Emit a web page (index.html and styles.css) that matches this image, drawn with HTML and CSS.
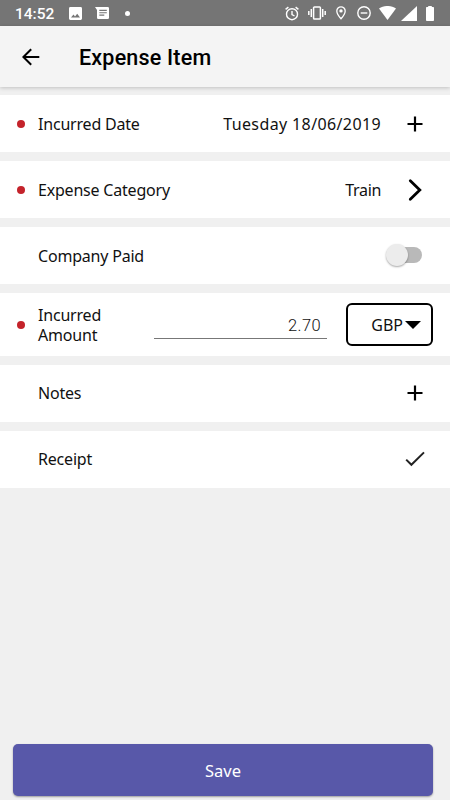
FILE: index.html
```
<!DOCTYPE html>
<html lang="en">
<head>
    <meta charset="UTF-8">
    <meta name="viewport" content="width=device-width, initial-scale=1.0">
    <title>Expense Item</title>
    <link rel="stylesheet" href="styles.css">
</head>
<body>
    <div class="status-bar">
        <span class="time">14:52</span>
        <svg class="icon-image" width="13" height="13" viewBox="0 0 13 13"><path fill="#fff" fill-rule="evenodd" d="M1.4 0h10.2Q13 0 13 1.4v10.2q0 1.4-1.4 1.4H1.4Q0 13 0 11.6V1.4Q0 0 1.4 0zM2 10.4h9L8.2 6.7 6 9.4 4.5 7.6z"/></svg>
        <svg class="icon-chat" width="14" height="13" viewBox="0 0 14 13"><path fill="#fff" fill-rule="evenodd" d="M0 0h12.7Q14 0 14 1.3v9.4q0 1.3-1.3 1.3H3.3Q2 12 2 10.7V3zM4.3 2.8v1.1h7.5V2.8zM4.3 5.2v1.1h7.5V5.2zM4.3 7.6v1.1h5V7.6z"/></svg>
        <span class="dot"></span>
        <div class="system-icons">
            <svg width="14" height="15" viewBox="0 0 14 15" fill="none" stroke="#fff" stroke-width="1.4"><circle cx="7" cy="8.2" r="5.5"/><path d="M7 5v3.5l2.5 1.5M.6 3.4l2.8-2.3M13.4 3.4l-2.8-2.3"/></svg>
            <svg class="icon-vibrate" width="18" height="14" viewBox="0 0 18 14" fill="none" stroke="#fff" stroke-width="1.5"><rect x="5.6" y="1" width="6.8" height="12" rx=".8"/><path d="M3.3 3v8M.8 5v4M14.7 3v8M17.2 5v4"/></svg>
            <svg class="icon-pin" width="10" height="14" viewBox="0 0 10 14"><path fill="none" stroke="#fff" stroke-width="1.3" d="M5 .8a4.2 4.2 0 0 1 4.2 4.2C9.2 8 5 12.8 5 12.8S.8 8 .8 5A4.2 4.2 0 0 1 5 .8z"/><circle cx="5" cy="4.9" r="1.7" fill="#fff"/></svg>
            <svg class="icon-dnd" width="14" height="14" viewBox="0 0 14 14" fill="none" stroke="#fff" stroke-width="1.4"><circle cx="7" cy="7" r="6.2"/><path d="M3.7 7h6.6"/></svg>
            <svg class="icon-wifi" width="17" height="14" viewBox="0 0 17 14"><path fill="#fff" d="M0 2.6C5-.9 12-.9 17 2.6L8.5 14z"/></svg>
            <svg class="icon-signal" width="16" height="15" viewBox="0 0 16 15"><path fill="#fff" d="M16 0v15H0z"/></svg>
            <svg class="icon-battery" width="8" height="15" viewBox="0 0 8 15"><path fill="#fff" d="M2.2 0h3.6v1h1.4q.8 0 .8.8v12.3q0 .9-.8.9H.8q-.8 0-.8-.9V1.8Q0 1 .8 1h1.4z"/></svg>
        </div>
    </div>

    <header class="app-bar">
        <svg width="18" height="18" viewBox="0 0 18 18" fill="none" stroke="#000" stroke-width="2"><path d="M17.3 9H1.6M9.2 1.2L1.4 9l7.8 7.8"/></svg>
        <h1>Expense Item</h1>
    </header>

    <main class="form">
        <div class="row required">
            <span class="label">Incurred Date</span>
            <span class="value value-date">Tuesday 18/06/2019</span>
            <svg class="action" width="24" height="24" viewBox="0 0 24 24"><path d="M12 4.5v15M4.5 12h15"/></svg>
        </div>
        <div class="row required">
            <span class="label">Expense Category</span>
            <span class="value">Train</span>
            <svg class="action chevron" width="24" height="24" viewBox="0 0 24 24"><path d="M7.3 2.7l9.5 9.3-9.5 9.3"/></svg>
        </div>
        <div class="row">
            <span class="label">Company Paid</span>
            <span class="switch"><span class="knob"></span></span>
        </div>
        <div class="row row-amount required">
            <span class="label">Incurred<br>Amount</span>
            <div class="amount">2.70</div>
            <div class="currency">
                <span>GBP</span>
                <svg width="16" height="8" viewBox="0 0 16 8"><path d="M0 0h16L8 8z"/></svg>
            </div>
        </div>
        <div class="row row-short">
            <span class="label">Notes</span>
            <svg class="action" width="24" height="24" viewBox="0 0 24 24"><path d="M12 4.5v15M4.5 12h15"/></svg>
        </div>
        <div class="row row-short">
            <span class="label">Receipt</span>
            <svg class="action check" width="24" height="24" viewBox="0 0 24 24"><path d="M3.2 12.6l5.2 5.2L21 5.4"/></svg>
        </div>
    </main>

    <footer class="footer">
        <button type="button" class="save">Save</button>
    </footer>
</body>
</html>
```
FILE: styles.css
```
* {
    margin: 0;
    padding: 0;
    box-sizing: border-box;
}

body {
    height: 100vh;
    display: flex;
    flex-direction: column;
    overflow: hidden;
    background: #f0f0f0;
    color: #111;
    font-family: 'Noto Sans', 'Open Sans', sans-serif;
    font-size: 16px;
}

svg {
    display: block;
    flex-shrink: 0;
}

.status-bar {
    height: 26px;
    flex-shrink: 0;
    display: flex;
    align-items: center;
    padding: 0 16px 0 15px;
    background: #757575;
    color: #fff;
}

.time {
    width: 54px;
    padding-top: 1px;
    font-family: Roboto, sans-serif;
    font-size: 15.5px;
    font-weight: 500;
    line-height: 26px;
}

.icon-chat {
    margin-left: 13px;
}

.dot {
    width: 5px;
    height: 5px;
    margin-left: 16px;
    border-radius: 50%;
    background: #fff;
}

.system-icons {
    display: flex;
    align-items: center;
    margin-left: auto;
}

.icon-vibrate {
    margin-left: 9px;
}

.icon-pin {
    margin-left: 10px;
}

.icon-dnd {
    margin-left: 11px;
}

.icon-wifi {
    margin-left: 8px;
}

.icon-signal {
    margin-left: 5px;
}

.icon-battery {
    margin-left: 9px;
}

.app-bar {
    height: 61px;
    flex-shrink: 0;
    display: flex;
    align-items: center;
    gap: 39px;
    padding: 1px 22px 0;
    background: #f4f4f4;
    box-shadow: 0 1px 4px rgba(0, 0, 0, 0.2);
}

h1 {
    padding-top: 1px;
    color: #000;
    font-family: Roboto, sans-serif;
    font-size: 21.5px;
    font-weight: 500;
    letter-spacing: 0.2px;
}

.form {
    display: flex;
    flex-direction: column;
    gap: 9px;
    margin-top: 8px;
}

.row {
    height: 57px;
    display: flex;
    align-items: center;
    padding: 0 23px 0 38px;
    background: #fff;
}

.required {
    padding-left: 17px;
}

.required::before {
    content: "";
    width: 8px;
    height: 8px;
    margin-right: 13px;
    border-radius: 50%;
    background: #c4232b;
}

.label {
    letter-spacing: -0.2px;
    line-height: 20px;
}

.value {
    margin-left: auto;
    margin-right: 22px;
    letter-spacing: -0.35px;
}

.value-date {
    letter-spacing: 0.38px;
}

.action {
    fill: none;
    stroke: #000;
    stroke-width: 2.2;
}

.label + .action {
    margin-left: auto;
}

.chevron {
    stroke-width: 2.8;
    stroke-linecap: round;
}

.check {
    stroke: #222;
    stroke-width: 2;
}

.switch {
    width: 33px;
    height: 16px;
    display: flex;
    align-items: center;
    margin-left: auto;
    margin-right: 5px;
    margin-bottom: 1px;
    border-radius: 8px;
    background: #b9b9b9;
}

.knob {
    width: 22px;
    height: 22px;
    flex-shrink: 0;
    margin-left: -3px;
    border-radius: 50%;
    background: #ececec;
    box-shadow: 0 1px 2px rgba(0, 0, 0, 0.35);
}

.row-amount {
    height: 63px;
    padding-right: 17px;
}

.row-short {
    padding-bottom: 2px;
}

.amount {
    width: 173px;
    height: 30px;
    margin-left: auto;
    margin-right: 19px;
    margin-bottom: 2px;
    padding-right: 6px;
    border-bottom: 1px solid #777;
    font-family: Roboto, sans-serif;
    font-size: 16.5px;
    font-weight: 300;
    letter-spacing: 0.4px;
    line-height: 33px;
    text-align: right;
}

.currency {
    width: 87px;
    height: 43px;
    display: flex;
    align-items: center;
    justify-content: flex-end;
    gap: 2px;
    padding-right: 10px;
    border: 2px solid #000;
    border-radius: 6px;
}

.footer {
    margin-top: auto;
    padding: 0 17px 4px 13px;
}

.save {
    display: block;
    width: 100%;
    height: 52px;
    border: none;
    border-radius: 5px;
    background: #5858a9;
    box-shadow: 0 1px 2px rgba(0, 0, 0, 0.35);
    color: #fff;
    font-family: inherit;
    font-size: 16.5px;
}
```
